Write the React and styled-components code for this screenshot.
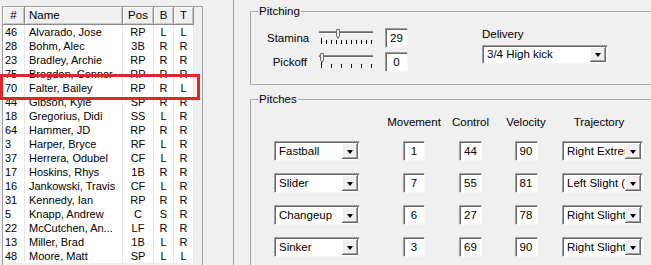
import React from 'react';
import styled, { createGlobalStyle } from 'styled-components';

const Global = createGlobalStyle`
  html, body { margin: 0; padding: 0; background: #f0f0f0; }
  body { font-family: "Liberation Sans", Arial, sans-serif; font-size: 11px; color: #000; }
`;

const Window = styled.div`
  position: relative;
  width: 651px;
  height: 265px;
  overflow: hidden;
  display: flex;
  background: #f0f0f0;
`;

const LeftPane = styled.div`
  flex: none;
  width: 233px;
  box-sizing: border-box;
  padding: 6px 0 0 2px;
`;

const ListFrame = styled.div`
  width: 201px;
  height: 300px;
  box-sizing: border-box;
  border: 1px solid #a0a0a0;
  border-bottom: none;
  background: #f0f0f0;
`;

const cols = '22px 98px 31px 20px 20px';

const HeaderRow = styled.div`
  display: grid;
  grid-template-columns: ${cols};
  width: 191px;
  height: 18px;
`;

const HeaderCell = styled.div`
  box-sizing: border-box;
  border-right: 1px solid #8a8a8a;
  border-bottom: 1px solid #8a8a8a;
  box-shadow: inset 1px 1px 0 #fff, inset -1px -1px 0 #c8c8c8;
  background: #f0f0f0;
  line-height: 17px;
  font-size: 11.5px;
  text-align: ${(p) => (p.$left ? 'left' : 'center')};
  padding-left: ${(p) => (p.$left ? '4px' : '0')};
  white-space: nowrap;
  overflow: hidden;
`;

const Row = styled.div`
  display: grid;
  grid-template-columns: ${cols};
  width: 191px;
  height: 14px;
  background: #fff;
`;

const Cell = styled.div`
  box-sizing: border-box;
  border-right: 1px solid #e6e6e6;
  line-height: 14px;
  font-size: 11px;
  white-space: nowrap;
  overflow: hidden;
  text-align: ${(p) => (p.$left ? 'left' : 'center')};
  padding-left: ${(p) => (p.$pad || 0)}px;
`;

const Highlight = styled.div`
  position: absolute;
  left: 0;
  top: 74px;
  width: 200px;
  height: 26px;
  box-sizing: border-box;
  border: 3px solid #e0262d;
  pointer-events: none;
`;

const RightPane = styled.div`
  flex: 1;
  display: flex;
  flex-direction: column;
  border-left: 1px solid #a0a0a0;
  padding-left: 16px;
`;

const GroupBox = styled.div`
  position: relative;
  flex: none;
  width: 460px;
  box-sizing: border-box;
  border: 1px solid #a8a8a8;
  margin-top: ${(p) => p.$top}px;
  height: ${(p) => p.$height}px;
  padding: ${(p) => p.$pad};
`;

const GroupTitle = styled.span`
  position: absolute;
  left: 7px;
  top: -7px;
  padding: 0 1px;
  background: #f0f0f0;
  line-height: 13px;
  font-size: 11.5px;
`;

const PitchingBody = styled.div`
  display: flex;
  align-items: flex-start;
`;

const SliderGrid = styled.div`
  display: grid;
  grid-template-columns: 40px 54px 23px;
  grid-auto-rows: 20px;
  column-gap: 12px;
  row-gap: 4px;
  align-items: center;
`;

const FieldLabel = styled.div`
  text-align: right;
  line-height: 20px;
  font-size: 11.5px;
  white-space: nowrap;
`;

const NumBox = styled.div`
  box-sizing: border-box;
  width: ${(p) => p.$w || 23}px;
  height: 20px;
  background: #fff;
  border: 1px solid;
  border-color: #a0a0a0 #f8f8f8 #f8f8f8 #a0a0a0;
  box-shadow: inset 1px 1px 0 #696969;
  text-align: center;
  line-height: 18px;
  font-size: 11.5px;
`;

const DeliveryCol = styled.div`
  margin-left: 74px;
  display: flex;
  flex-direction: column;
`;

const TopLabel = styled.div`
  line-height: 13px;
  font-size: 11.5px;
  margin-bottom: 4px;
`;

const Select = styled.div`
  box-sizing: border-box;
  display: flex;
  width: ${(p) => p.$w}px;
  height: ${(p) => p.$h || 20}px;
  background: #fff;
  border: 1px solid;
  border-color: #a0a0a0 #f8f8f8 #f8f8f8 #a0a0a0;
  box-shadow: inset 1px 1px 0 #696969;
  padding: 1px;
`;

const SelectText = styled.div`
  flex: 1;
  min-width: 0;
  overflow: hidden;
  white-space: nowrap;
  padding-left: 3px;
  font-size: 11.5px;
  line-height: ${(p) => p.$lh || 16}px;
`;

const SelectButton = styled.div`
  flex: none;
  width: 16px;
  box-sizing: border-box;
  background: #f0f0f0;
  box-shadow: inset -1px -1px 0 #696969, inset 1px 1px 0 #fff, inset -2px -2px 0 #a0a0a0;
  display: flex;
  align-items: center;
  justify-content: center;
  &::after {
    content: '';
    width: 0;
    height: 0;
    border-left: 3.5px solid transparent;
    border-right: 3.5px solid transparent;
    border-top: 4px solid #000;
    margin-top: 1px;
  }
`;

const PitchGrid = styled.div`
  display: grid;
  grid-template-columns: 113px 54px 59px 52px 91px;
  grid-template-rows: 13px;
  grid-auto-rows: 20px;
  row-gap: 12px;
  align-items: center;
  justify-items: center;
`;

const ColHead = styled.div`
  line-height: 13px;
  font-size: 11.5px;
  white-space: nowrap;
  justify-self: ${(p) => (p.$end ? 'end' : 'center')};
  width: ${(p) => (p.$end ? '81px' : 'auto')};
  text-align: center;
  padding-right: ${(p) => (p.$end ? '7px' : '0')};
  box-sizing: border-box;
`;

const StartCell = styled.div`
  justify-self: start;
`;

const EndCell = styled.div`
  justify-self: end;
`;

function Dropdown({ w, h, lh, text }) {
  return (
    <Select $w={w} $h={h}>
      <SelectText $lh={lh}>{text}</SelectText>
      <SelectButton />
    </Select>
  );
}

function Slider({ thumb, ticks }) {
  const step = 50 / (ticks - 1);
  return (
    <svg width="54" height="20" viewBox="0 0 54 20" style={{ display: 'block' }}>
      <line x1="0" y1="3.5" x2="54" y2="3.5" stroke="#8a8a8a" strokeWidth="1" />
      <line x1="0" y1="4.5" x2="54" y2="4.5" stroke="#6a6a6a" strokeWidth="1" />
      <line x1="0" y1="5.5" x2="54" y2="5.5" stroke="#ffffff" strokeWidth="1" />
      {Array.from({ length: ticks }).map((_, i) => (
        <line
          key={i}
          x1={2.5 + i * step}
          y1={i === 0 ? 10 : 12}
          x2={2.5 + i * step}
          y2="16"
          stroke="#000"
          strokeWidth="1"
        />
      ))}
      <path
        d={`M${thumb - 1.5} 1.5 L${thumb + 1.5} 1.5 L${thumb + 1.5} 8 L${thumb} 10.5 L${thumb - 1.5} 8 Z`}
        fill="#f0f0f0"
        stroke="#6a6a6a"
        strokeWidth="1"
      />
    </svg>
  );
}

const players = [
  ['46', 'Alvarado, Jose', 'RP', 'L', 'L'],
  ['28', 'Bohm, Alec', '3B', 'R', 'R'],
  ['23', 'Bradley, Archie', 'RP', 'R', 'R'],
  ['75', 'Brogdon, Connor', 'RP', 'R', 'R'],
  ['70', 'Falter, Bailey', 'RP', 'R', 'L'],
  ['44', 'Gibson, Kyle', 'SP', 'R', 'R'],
  ['18', 'Gregorius, Didi', 'SS', 'L', 'R'],
  ['64', 'Hammer, JD', 'RP', 'R', 'R'],
  ['3', 'Harper, Bryce', 'RF', 'L', 'R'],
  ['37', 'Herrera, Odubel', 'CF', 'L', 'R'],
  ['17', 'Hoskins, Rhys', '1B', 'R', 'R'],
  ['16', 'Jankowski, Travis', 'CF', 'L', 'R'],
  ['31', 'Kennedy, Ian', 'RP', 'R', 'R'],
  ['5', 'Knapp, Andrew', 'C', 'S', 'R'],
  ['22', 'McCutchen, An...', 'LF', 'R', 'R'],
  ['13', 'Miller, Brad', '1B', 'L', 'R'],
  ['48', 'Moore, Matt', 'SP', 'L', 'L'],
];

const pitches = [
  ['Fastball', '1', '44', '90', 'Right Extreme'],
  ['Slider', '7', '55', '81', 'Left Slight (5%)'],
  ['Changeup', '6', '27', '78', 'Right Slight'],
  ['Sinker', '3', '69', '90', 'Right Slight'],
];

export default function App() {
  return (
    <>
      <Global />
      <Window>
        <LeftPane>
          <ListFrame>
            <HeaderRow>
              <HeaderCell>#</HeaderCell>
              <HeaderCell $left>Name</HeaderCell>
              <HeaderCell>Pos</HeaderCell>
              <HeaderCell>B</HeaderCell>
              <HeaderCell>T</HeaderCell>
            </HeaderRow>
            {players.map((p) => (
              <Row key={p[0]}>
                <Cell $left $pad={2}>{p[0]}</Cell>
                <Cell $left $pad={4}>{p[1]}</Cell>
                <Cell>{p[2]}</Cell>
                <Cell>{p[3]}</Cell>
                <Cell>{p[4]}</Cell>
              </Row>
            ))}
          </ListFrame>
        </LeftPane>
        <RightPane>
          <GroupBox $top={11} $height={74} $pad="16px 0 0 16px">
            <GroupTitle>Pitching</GroupTitle>
            <PitchingBody>
              <SliderGrid>
                <FieldLabel>Stamina</FieldLabel>
                <Slider thumb={19} ticks={11} />
                <NumBox>29</NumBox>
                <FieldLabel>Pickoff</FieldLabel>
                <Slider thumb={3} ticks={6} />
                <NumBox>0</NumBox>
              </SliderGrid>
              <DeliveryCol>
                <TopLabel>Delivery</TopLabel>
                <Dropdown w={126} h={19} lh={15} text="3/4 High kick" />
              </DeliveryCol>
            </PitchingBody>
          </GroupBox>
          <GroupBox $top={14} $height={200} $pad="16px 0 0 23px">
            <GroupTitle>Pitches</GroupTitle>
            <PitchGrid>
              <span />
              <ColHead>Movement</ColHead>
              <ColHead>Control</ColHead>
              <ColHead>Velocity</ColHead>
              <ColHead $end>Trajectory</ColHead>
              {pitches.map((r) => (
                <React.Fragment key={r[0]}>
                  <StartCell>
                    <Dropdown w={86} text={r[0]} />
                  </StartCell>
                  <NumBox $w={22}>{r[1]}</NumBox>
                  <NumBox>{r[2]}</NumBox>
                  <NumBox>{r[3]}</NumBox>
                  <EndCell>
                    <Dropdown w={81} text={r[4]} />
                  </EndCell>
                </React.Fragment>
              ))}
            </PitchGrid>
          </GroupBox>
        </RightPane>
        <Highlight />
      </Window>
    </>
  );
}
